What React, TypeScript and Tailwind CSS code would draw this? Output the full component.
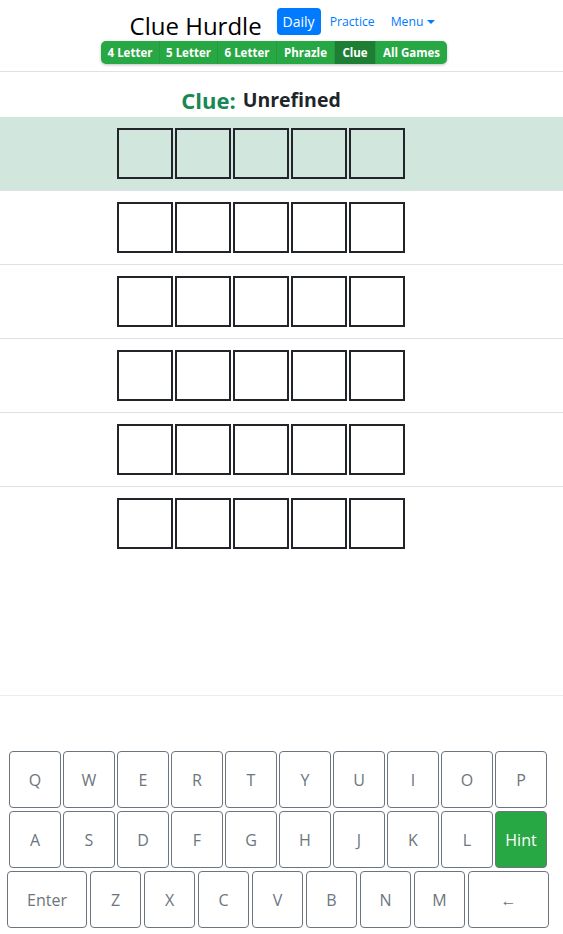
import React from "react";

const games = [
  { label: "4 Letter", w: "w-[59px]" },
  { label: "5 Letter", w: "w-[58px]" },
  { label: "6 Letter", w: "w-[59px]" },
  { label: "Phrazle", w: "w-[58px]" },
  { label: "Clue", w: "w-[41px]", active: true },
  { label: "All Games", w: "w-[71px]" },
];

const row1 = ["Q", "W", "E", "R", "T", "Y", "U", "I", "O", "P"];
const row2 = ["A", "S", "D", "F", "G", "H", "J", "K", "L"];
const row3 = ["Z", "X", "C", "V", "B", "N", "M"];

function Key({ label, className = "" }: { label: string; className?: string }) {
  return (
    <button
      className={
        "h-[57px] border border-[#6c757d] rounded-[4px] text-[16px] text-[#6c757d] flex items-center justify-center " +
        className
      }
    >
      {label}
    </button>
  );
}

function GuessRow({ active, last }: { active?: boolean; last?: boolean }) {
  return (
    <div
      className={
        "py-[11px] flex justify-center pr-[41px] " +
        (active ? "bg-[#d1e7dd] " : "") +
        (last ? "" : "border-b border-[#dee2e6]")
      }
    >
      <div className="flex gap-[2px]">
        {[0, 1, 2, 3, 4].map((i) => (
          <div key={i} className="w-[56px] h-[51px] border-2 border-[#212529]" />
        ))}
      </div>
    </div>
  );
}

export default function App() {
  return (
    <div className="min-h-[934px] bg-white text-[#212529] font-['Open_Sans','Noto_Sans',sans-serif]">
      {/* header */}
      <div className="border-b border-[#dee2e6] pt-[8px] pb-[7px]">
        <div className="flex justify-center items-start h-[27px] pl-[2px]">
          <h1 className="mt-[4px] mr-[15px] text-[24px] leading-[28px] font-normal text-black whitespace-nowrap">
            Clue Hurdle
          </h1>
          <button className="h-[27px] w-[44px] shrink-0 rounded-[4px] bg-[#007bff] text-white text-[14px]">
            Daily
          </button>
          <a className="ml-[9px] h-[27px] leading-[27px] text-[12.2px] text-[#007bff]">
            Practice
          </a>
          <a className="ml-[16px] h-[27px] leading-[27px] text-[12.2px] text-[#007bff] flex items-center">
            Menu
            <span className="ml-[4px] w-0 h-0 border-l-[4px] border-r-[4px] border-t-[4px] border-l-transparent border-r-transparent border-t-[#007bff]" />
          </a>
        </div>
        <div className="flex justify-center mt-[6px] pr-[15px]">
          <div className="flex h-[23px] rounded-[5px] overflow-hidden bg-[#28a745] shadow-[0_1px_3px_rgba(0,0,0,0.25)]">
            {games.map((g, i) => (
              <div
                key={g.label}
                className={
                  g.w +
                  " flex items-center justify-center text-[11.5px] font-bold text-white " +
                  (g.active ? "bg-[#1e7e34] " : "") +
                  (i < games.length - 1 ? "border-r border-[#269a40]" : "")
                }
              >
                {g.label}
              </div>
            ))}
          </div>
        </div>
      </div>

      {/* clue */}
      <div className="h-[45px] flex items-end justify-center pr-[41px] pb-[3px]">
        <span className="text-[22px] font-bold text-[#198754] leading-[28px]">Clue:</span>
        <span className="ml-[7px] text-[19.5px] font-bold text-[#212529] leading-[28px]">
          Unrefined
        </span>
      </div>

      {/* board */}
      <div>
        <GuessRow active />
        <GuessRow />
        <GuessRow />
        <GuessRow />
        <GuessRow />
        <GuessRow last />
      </div>

      {/* keyboard */}
      <div className="mt-[135px] border-t border-[#ececec] pt-[55px] flex flex-col gap-[3px]">
        <div className="flex gap-[2px] pl-[9px]">
          {row1.map((k) => (
            <Key key={k} label={k} className="w-[52px]" />
          ))}
        </div>
        <div className="flex gap-[2px] pl-[9px]">
          {row2.map((k) => (
            <Key key={k} label={k} className="w-[52px]" />
          ))}
          <button className="w-[52px] h-[57px] rounded-[4px] border border-[#6c757d] bg-[#28a745] text-white text-[16px]">
            Hint
          </button>
        </div>
        <div className="flex gap-[3px] pl-[7px]">
          <Key label="Enter" className="w-[80px]" />
          {row3.map((k) => (
            <Key key={k} label={k} className="w-[51px]" />
          ))}
          <Key label="←" className="w-[81px]" />
        </div>
      </div>
    </div>
  );
}
